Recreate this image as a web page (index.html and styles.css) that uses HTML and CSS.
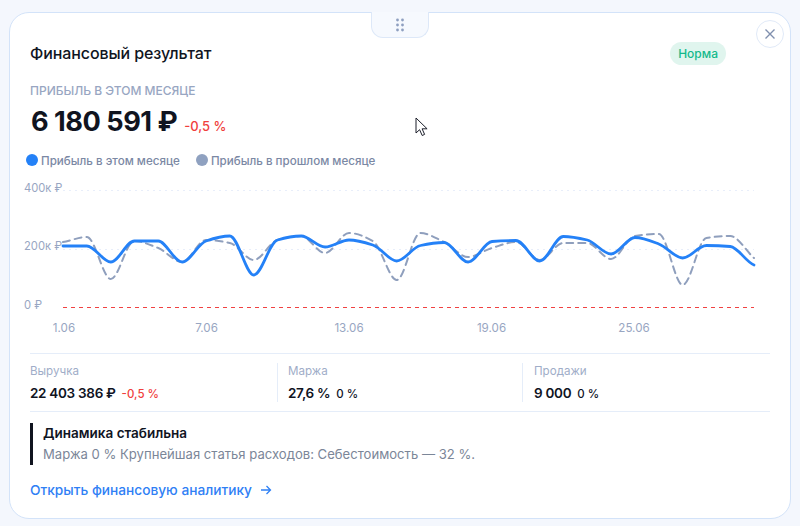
FILE: index.html
```html
<!DOCTYPE html>
<html lang="ru">
<head>
<meta charset="utf-8">
<title>Финансовый результат</title>
<link rel="stylesheet" href="styles.css">
</head>
<body>
<section class="card">
  <div class="handle">
    <svg width="8" height="14" viewBox="0 0 8 14"><g fill="#8e9fc0"><circle cx="1.5" cy="2" r="1.4"/><circle cx="6.5" cy="2" r="1.4"/><circle cx="1.5" cy="7" r="1.4"/><circle cx="6.5" cy="7" r="1.4"/><circle cx="1.5" cy="12" r="1.4"/><circle cx="6.5" cy="12" r="1.4"/></g></svg>
  </div>
  <button class="close">
    <svg width="12" height="12" viewBox="0 0 12 12"><path d="M1.5 1.5l9 9M10.5 1.5l-9 9" stroke="#7f8fae" stroke-width="1.4" fill="none"/></svg>
  </button>
  <svg class="cursor" width="14" height="20" viewBox="0 0 14 20"><path d="M1 1v15l3.6-3.3 2.6 5.8 2.4-1.1-2.5-5.6h5z" fill="#fff" stroke="#1c1f2b" stroke-width="1"/></svg>

  <header class="head">
    <h2 class="title">Финансовый результат</h2>
    <span class="badge">Норма</span>
  </header>

  <div class="kicker">ПРИБЫЛЬ В ЭТОМ МЕСЯЦЕ</div>
  <div class="total">
    <span class="total-value">6 180 591 ₽</span>
    <span class="delta-big">-0,5 %</span>
  </div>

  <div class="legend">
    <span class="legend-item"><i class="dot dot-blue"></i>Прибыль в этом месяце</span>
    <span class="legend-item"><i class="dot dot-grey"></i>Прибыль в прошлом месяце</span>
  </div>

  <svg class="chart" width="760" height="160" viewBox="20 180 760 160">
    <g class="grid">
      <line x1="63" y1="190.5" x2="754" y2="190.5"/>
      <line x1="63" y1="249.5" x2="754" y2="249.5"/>
    </g>
    <line class="zero" x1="63" y1="307.5" x2="754" y2="307.5"/>
    <g class="ylabels">
      <text x="24" y="192">400к ₽</text>
      <text x="24" y="250">200к ₽</text>
      <text x="24" y="309">0 ₽</text>
    </g>
    <g class="xlabels">
      <text x="64" y="332">1.06</text>
      <text x="206.5" y="332">7.06</text>
      <text x="349" y="332">13.06</text>
      <text x="491.5" y="332">19.06</text>
      <text x="634" y="332">25.06</text>
    </g>
    <path class="prev" d="M63 242C71 240.7 79 237 86.8 237C95 237 103 279 110.7 279C119 279 126 241 134.5 241C142 241 150 245 158.3 248C166 251 174 262 182.2 262C190 262 198 240 206 240C214 240 222 241.3 229.8 243C238 244.7 246 260 253.7 260C262 260 269 242.3 277.5 240C285 237.7 293 236 301.3 236C309 236 317 253 325.1 253C333 253 341 233 349 233C357 233 365 236.7 372.8 241C381 245.3 389 280 396.6 280C405 280 412 233 420.5 233C428 233 436 238.3 444.3 242C452 245.7 460 257 468.1 257C476 257 484 250.3 492 248C500 245.7 508 242 515.8 242C524 242 532 260 539.6 260C548 260 555 243 563.4 243C571 243 579 243 587.3 243C595 243 603 259 611.1 259C619 259 627 237.3 634.9 236C643 234.7 651 234 658.8 234C667 234 675 285 682.6 285C691 285 698 239.3 706.4 238C714 236.7 722 236 730.3 236C738 236 746 251 754 258"/>
    <path class="curr" d="M63 246C71 246 79 246 86.8 246C95 246 103 262 110.7 262C119 262 126 241 134.5 241C142 241 150 241 158.3 241C166 241 174 262 182.2 262C190 262 198 243.7 206 241C214 238.3 222 236 229.8 236C238 236 246 275 253.7 275C262 275 269 242.3 277.5 240C285 237.7 293 236 301.3 236C309 236 317 247 325.1 247C333 247 341 240 349 240C357 240 365 242.5 372.8 245C381 247.5 389 261 396.6 261C405 261 412 247.2 420.5 245.5C428 243.8 436 242.5 444.3 242.5C452 242.5 460 262 468.1 262C476 262 484 242.2 492 241.5C500 240.8 508 240.5 515.8 240.5C524 240.5 532 261 539.6 261C548 261 555 236.5 563.4 236.5C571 236.5 579 238.1 587.3 240C595 241.9 603 254 611.1 254C619 254 627 237.5 634.9 237.5C643 237.5 651 241 658.8 244C667 247 675 258 682.6 258C691 258 698 245.5 706.4 245.5C714 245.5 722 245.8 730.3 246.5C738 247.2 746 262 754 265"/>
  </svg>

  <div class="stats">
    <div class="stat stat-a">
      <div class="stat-label">Выручка</div>
      <div class="stat-line"><span class="stat-value">22 403 386 ₽</span><span class="stat-delta neg">-0,5 %</span></div>
    </div>
    <div class="stat stat-b">
      <div class="stat-label">Маржа</div>
      <div class="stat-line"><span class="stat-value">27,6 %</span><span class="stat-delta">0 %</span></div>
    </div>
    <div class="stat stat-c">
      <div class="stat-label">Продажи</div>
      <div class="stat-line"><span class="stat-value">9 000</span><span class="stat-delta">0 %</span></div>
    </div>
  </div>

  <div class="note">
    <div class="note-title">Динамика стабильна</div>
    <div class="note-text">Маржа 0 % Крупнейшая статья расходов: Себестоимость — 32 %.</div>
  </div>

  <a class="link" href="#">Открыть финансовую аналитику
    <svg width="12" height="12" viewBox="0 0 12 12"><path d="M1 6h9.5M6.5 2l4 4-4 4" stroke="#2f80f5" stroke-width="1.3" fill="none"/></svg>
  </a>
</section>
</body>
</html>
```
FILE: styles.css
```css
* { box-sizing: border-box; }
html, body { margin: 0; height: 526px; overflow: hidden; }
body {
  background: #f4f7fd;
  font-family: "Inter", "Noto Sans", sans-serif;
  padding: 12px 9px 7px 9px;
}
.card {
  position: relative;
  width: 782px;
  height: 507px;
  background: #fff;
  border: 1px solid #d3e3f9;
  border-radius: 20px;
  padding: 0 20px;
}
.handle {
  position: absolute;
  left: 361px;
  top: -1px;
  width: 58px;
  height: 26px;
  background: #f6f9fe;
  border: 1px solid #dde8f8;
  border-top: 0;
  border-radius: 0 0 12px 12px;
  display: flex;
  align-items: center;
  justify-content: center;
}
.close {
  position: absolute;
  right: 6px;
  top: 7px;
  width: 28px;
  height: 28px;
  padding: 0;
  background: #fff;
  border: 1px solid #e1eaf8;
  border-radius: 50%;
  display: flex;
  align-items: center;
  justify-content: center;
}
.cursor { position: absolute; left: 405px; top: 104px; }
.head {
  display: flex;
  justify-content: space-between;
  align-items: center;
  height: 24px;
  margin-top: 28px;
  padding-right: 44px;
}
.title {
  margin: 0;
  font-size: 16px;
  font-weight: 500;
  color: #101522;
  letter-spacing: -0.1px;
}
.badge {
  background: #e0f5ee;
  color: #14b98b;
  font-size: 12px;
  font-weight: 500;
  height: 23px;
  line-height: 23px;
  padding: 0 8px;
  border-radius: 12px;
}
.kicker {
  margin-top: 18px;
  font-size: 12px;
  font-weight: 500;
  line-height: 16px;
  color: #98a6c2;
}
.total {
  display: flex;
  align-items: baseline;
  gap: 7px;
  height: 34px;
  margin-top: 6px;
}
.total-value {
  font-size: 27.2px;
  font-weight: 700;
  line-height: 34px;
  color: #10141f;
  letter-spacing: -0.5px;
  padding-left: 1px;
}
.delta-big { font-size: 13px; font-weight: 500; color: #f0403c; }
.legend {
  display: flex;
  gap: 16px;
  margin: 12px 0 0 -4px;
  height: 20px;
  align-items: center;
}
.legend-item {
  display: flex;
  align-items: center;
  gap: 3px;
  font-size: 11.6px;
  font-weight: 500;
  color: #7b88a4;
}
.dot {
  display: block;
  width: 12px;
  height: 12px;
  border-radius: 50%;
  margin-top: -2px;
}
.dot-blue { background: #2481f7; }
.dot-grey { background: #8fa1c0; }
.chart {
  display: block;
  margin: 9px 0 0 -10px;
}
.grid line {
  stroke: #e8eefa;
  stroke-width: 1;
  stroke-dasharray: 2 4;
}
.zero { stroke: #f04242; stroke-width: 1; stroke-dasharray: 4 4; }
.ylabels text, .xlabels text {
  font-size: 11.2px;
  fill: #98a6c2;
}
.xlabels text { font-size: 11.6px; text-anchor: middle; }
.prev {
  fill: none;
  stroke: #8f9fbd;
  stroke-width: 2;
  stroke-dasharray: 7 5;
  stroke-linecap: round;
}
.curr {
  fill: none;
  stroke: #2481f7;
  stroke-width: 2.8;
  stroke-linecap: round;
}
.stats {
  display: flex;
  margin-top: 13px;
  height: 59px;
  border-top: 1px solid #e5edf9;
  border-bottom: 1px solid #e5edf9;
  padding-top: 9px;
}
.stat { height: 39px; }
.stat-a { width: 247px; }
.stat-b { width: 245px; border-left: 1px solid #e5edf9; padding-left: 10px; }
.stat-c { border-left: 1px solid #e5edf9; padding-left: 11px; }
.stat-label { font-size: 11.6px; line-height: 16px; color: #a0adc8; }
.stat-line { display: flex; align-items: baseline; gap: 6px; margin-top: 5px; }
.stat-value { font-size: 13.5px; font-weight: 600; line-height: 18px; color: #10141f; letter-spacing: -0.3px; }
.stat-delta { font-size: 11.5px; font-weight: 500; color: #10141f; }
.stat-delta.neg { color: #f0403c; }
.note {
  margin-top: 11px;
  height: 42px;
  border-left: 3px solid #10141f;
  padding-left: 10px;
}
.note-title { font-size: 13.5px; font-weight: 600; line-height: 20px; color: #10141f; }
.note-text { font-size: 13.1px; line-height: 22px; color: #7b8698; }
.link {
  display: inline-flex;
  align-items: center;
  gap: 8px;
  margin-top: 15px;
  font-size: 13.7px;
  font-weight: 500;
  line-height: 20px;
  color: #2f80f5;
  text-decoration: none;
}
```
